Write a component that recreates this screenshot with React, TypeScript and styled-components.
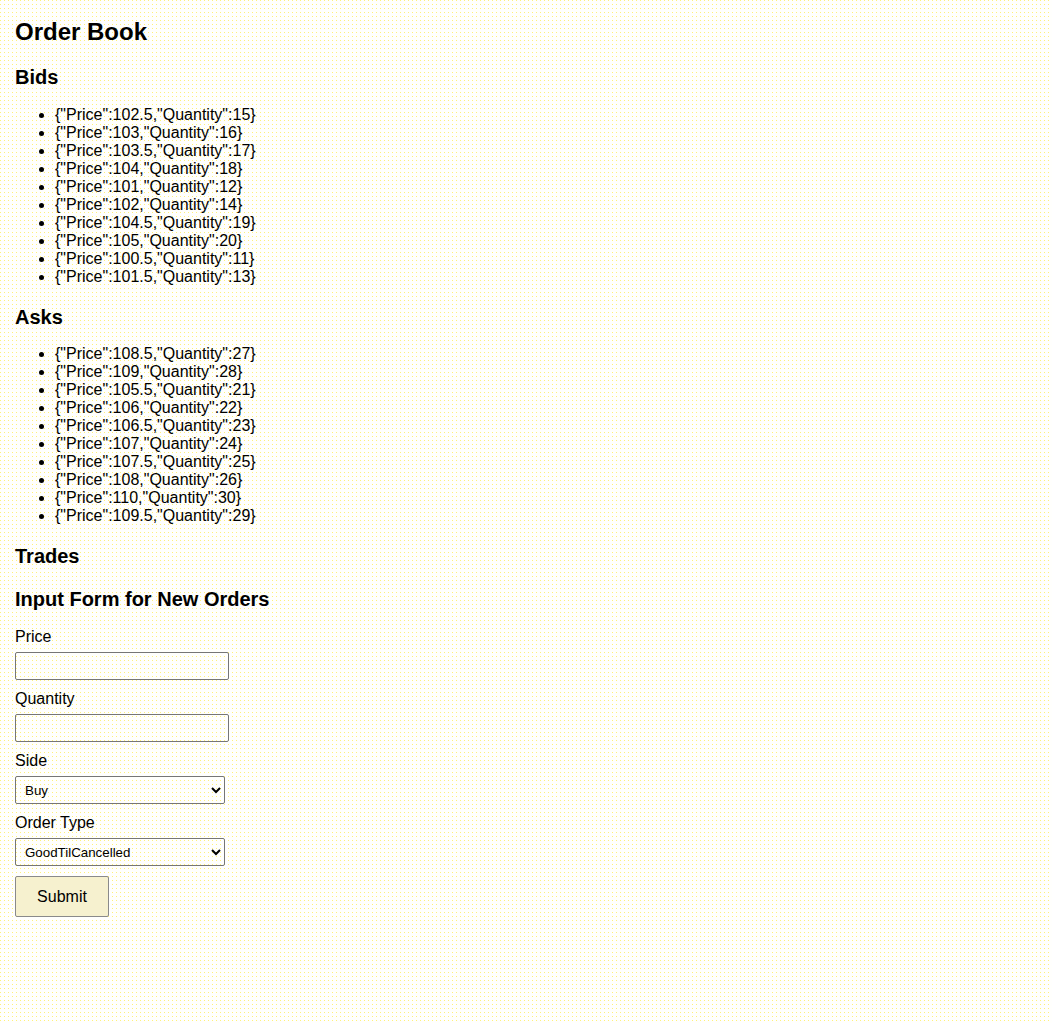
import { FC } from 'react'
import styled, { createGlobalStyle } from 'styled-components'

interface Order {
  Price: number
  Quantity: number
}

const bids: Order[] = [
  { Price: 102.5, Quantity: 15 },
  { Price: 103, Quantity: 16 },
  { Price: 103.5, Quantity: 17 },
  { Price: 104, Quantity: 18 },
  { Price: 101, Quantity: 12 },
  { Price: 102, Quantity: 14 },
  { Price: 104.5, Quantity: 19 },
  { Price: 105, Quantity: 20 },
  { Price: 100.5, Quantity: 11 },
  { Price: 101.5, Quantity: 13 },
]

const asks: Order[] = [
  { Price: 108.5, Quantity: 27 },
  { Price: 109, Quantity: 28 },
  { Price: 105.5, Quantity: 21 },
  { Price: 106, Quantity: 22 },
  { Price: 106.5, Quantity: 23 },
  { Price: 107, Quantity: 24 },
  { Price: 107.5, Quantity: 25 },
  { Price: 108, Quantity: 26 },
  { Price: 110, Quantity: 30 },
  { Price: 109.5, Quantity: 29 },
]

const GlobalStyle = createGlobalStyle`
  html, body {
    margin: 0;
    padding: 0;
    min-height: 100%;
  }
  body {
    font-family: "Liberation Sans", Arial, sans-serif;
    color: #000;
    background-color: #fffffd;
    /* one pale yellow pixel per 4x4 tile, like the dithered original */
    background-image: conic-gradient(from 0deg at 1px 1px, transparent 0 75%, #fff07a 75% 100%);
    background-size: 4px 4px;
  }
`

const OrderList: FC<{ orders: Order[] }> = ({ orders }) => (
  <List>
    {orders.map((o, i) => (
      <Item key={i}>{JSON.stringify(o)}</Item>
    ))}
  </List>
)

export default function App() {
  return (
    <>
      <GlobalStyle />
      <Page>
        <Title>Order Book</Title>

        <Section>Bids</Section>
        <OrderList orders={bids} />

        <Section>Asks</Section>
        <OrderList orders={asks} />

        <Section>Trades</Section>
        <List />

        <Section>Input Form for New Orders</Section>
        <Form onSubmit={e => e.preventDefault()}>
          <Label htmlFor='price'>Price</Label>
          <TextInput id='price' type='number' />

          <Label htmlFor='quantity'>Quantity</Label>
          <TextInput id='quantity' type='number' />

          <Label htmlFor='side'>Side</Label>
          <Select id='side' defaultValue='Buy'>
            <option value='Buy'>Buy</option>
            <option value='Sell'>Sell</option>
          </Select>

          <Label htmlFor='type'>Order Type</Label>
          <Select id='type' defaultValue='GoodTilCancelled'>
            <option value='GoodTilCancelled'>GoodTilCancelled</option>
            <option value='FillOrKill'>FillOrKill</option>
            <option value='ImmediateOrCancel'>ImmediateOrCancel</option>
          </Select>

          <SubmitButton type='submit'>Submit</SubmitButton>
        </Form>
      </Page>
    </>
  )
}

const Page = styled.div`
  padding: 18px 15px 40px 15px;
`

const Title = styled.h1`
  margin: 0;
  font-size: 24px;
  line-height: 28px;
  font-weight: bold;
`

const Section = styled.h2`
  margin: 20px 0 16.5px 0;
  font-size: 20px;
  line-height: 23px;
  font-weight: bold;
`

const List = styled.ul`
  margin: 0;
  padding-left: 40px;
  list-style: disc;
`

const Item = styled.li`
  font-size: 16px;
  line-height: 18px;
`

const Form = styled.form`
  display: flex;
  flex-direction: column;
  align-items: flex-start;
  padding-top: 0.5px;
`

const Label = styled.label`
  display: block;
  font-size: 16px;
  line-height: 18px;
  margin-bottom: 6px;
`

const TextInput = styled.input`
  box-sizing: border-box;
  width: 214px;
  height: 28px;
  margin: 0 0 10px 0;
  padding: 4px 6px;
  border: 1px solid #767676;
  border-radius: 2px;
  background: transparent;
  font-family: "Liberation Sans", Arial, sans-serif;
  font-size: 13.33px;
`

const Select = styled.select`
  box-sizing: border-box;
  width: 210px;
  height: 28px;
  margin: 0 0 10px 0;
  padding: 0 4px 0 5px;
  border: 1px solid #767676;
  border-radius: 2px;
  background: transparent;
  color: #000;
  font-family: "Liberation Sans", Arial, sans-serif;
  font-size: 13.33px;
`

const SubmitButton = styled.button`
  box-sizing: border-box;
  width: 94px;
  height: 41px;
  margin: 0;
  padding: 0;
  border: 1px solid #8a8a8a;
  border-radius: 2px;
  background: #f6f1cf;
  color: #000;
  font-family: "Liberation Sans", Arial, sans-serif;
  font-size: 16px;
`
